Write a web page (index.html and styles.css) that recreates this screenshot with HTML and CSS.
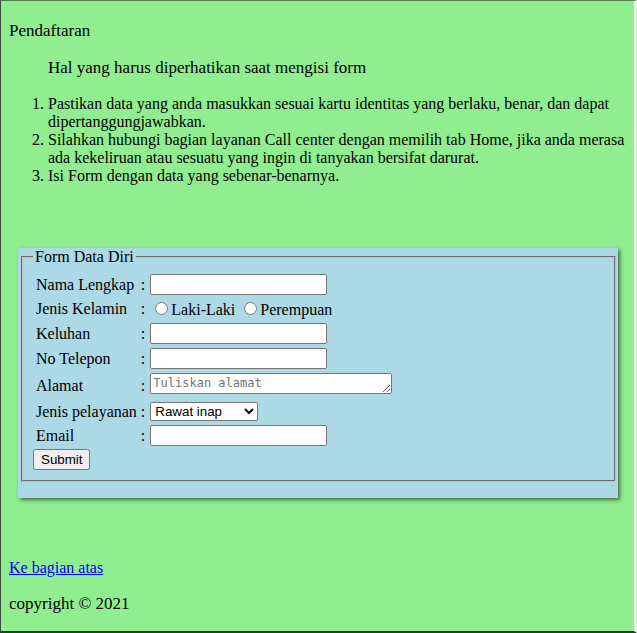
FILE: index.html
```html
<!DOCTYPE html>
<html lang="id">
<head>
<meta charset="utf-8">
<title>Pendaftaran</title>
<link rel="stylesheet" href="styles.css">
</head>
<body>
<div class="frame">
  <p class="title">Pendaftaran</p>
  <p class="sub">Hal yang harus diperhatikan saat mengisi form</p>
  <ol class="rules">
    <li>Pastikan data yang anda masukkan sesuai kartu identitas yang berlaku, benar, dan dapat dipertanggungjawabkan.</li>
    <li>Silahkan hubungi bagian layanan Call center dengan memilih tab Home, jika anda merasa ada kekeliruan atau sesuatu yang ingin di tanyakan bersifat darurat.</li>
    <li>Isi Form dengan data yang sebenar-benarnya.</li>
  </ol>
  <div class="formbox">
    <form>
      <fieldset class="fs">
        <legend>Form Data Diri</legend>
        <table class="tbl">
          <tr><td>Nama Lengkap</td><td class="colon">:</td><td><input class="txt" type="text"></td></tr>
          <tr><td>Jenis Kelamin</td><td class="colon">:</td><td><input type="radio" name="jk">Laki-Laki <input type="radio" name="jk">Perempuan</td></tr>
          <tr><td>Keluhan</td><td class="colon">:</td><td><input class="txt" type="text"></td></tr>
          <tr><td>No Telepon</td><td class="colon">:</td><td><input class="txt" type="text"></td></tr>
          <tr><td>Alamat</td><td class="colon">:</td><td><textarea class="area" placeholder="Tuliskan alamat"></textarea></td></tr>
          <tr><td>Jenis pelayanan</td><td class="colon">:</td><td><select class="sel"><option>Rawat inap</option><option>Rawat jalan</option></select></td></tr>
          <tr><td>Email</td><td class="colon">:</td><td><input class="txt" type="email"></td></tr>
        </table>
        <button class="btn" type="button">Submit</button>
      </fieldset>
    </form>
  </div>
  <p class="top-link"><a href="#">Ke bagian atas</a></p>
  <p class="copy">copyright © 2021</p>
</div>
</body>
</html>
```
FILE: styles.css
```css
html, body {
  margin: 0;
  padding: 0;
  background: #ffffff;
}
body {
  font-family: "Liberation Serif", "Times New Roman", serif;
  font-size: 16px;
  color: #000;
}
.frame {
  box-sizing: border-box;
  width: 637px;
  height: 633px;
  overflow: hidden;
  background: #90ee90;
  border-top: 1px solid #4f7f4f;
  border-left: 1px solid #3a4a3a;
  border-bottom: 2px solid #2f3b2f;
  border-right: 3px solid #ececec;
  padding: 0 8px;
}
.title {
  font-size: 17px;
  margin: 20px 0 17px;
}
.sub {
  font-size: 17px;
  margin: 17px 0 17px 39px;
}
.rules {
  margin: 16px 0;
  padding-left: 39px;
}
.formbox {
  margin: 63px 0 0 9px;
  width: 600px;
  background: #add8e6;
  box-shadow: 2px 2px 4px rgba(0, 0, 0, 0.55);
  padding-bottom: 16px;
}
.formbox form {
  margin: 0;
}
.fs {
  margin: 0 2px 0 3px;
  padding: 5px 10px 10px;
  border: 2px groove #c0c0c0;
}
.fs legend {
  padding: 0 2px;
}
.tbl {
  border-spacing: 2px;
}
.tbl td {
  padding: 1px;
  white-space: nowrap;
}
.tbl td.colon {
  padding-right: 2px;
}
.txt {
  box-sizing: border-box;
  width: 177px;
  height: 21px;
  margin: 0;
  font: 13.333px "Liberation Sans", Arial, sans-serif;
}
.area {
  box-sizing: border-box;
  width: 242px;
  height: 21px;
  margin: 0;
  font: 12px "DejaVu Sans Mono", monospace;
  vertical-align: baseline;
}
.area::placeholder {
  color: #757575;
}
.sel {
  width: 108px;
  height: 19px;
  margin: 0;
  font: 13.333px "Liberation Sans", Arial, sans-serif;
}
.btn {
  font: 13.333px "Liberation Sans", Arial, sans-serif;
  margin: 0;
}
.top-link {
  margin: 61px 0 16px;
}
.top-link a {
  color: #0000ee;
}
.copy {
  font-size: 17px;
  margin: 17px 0;
}
```
